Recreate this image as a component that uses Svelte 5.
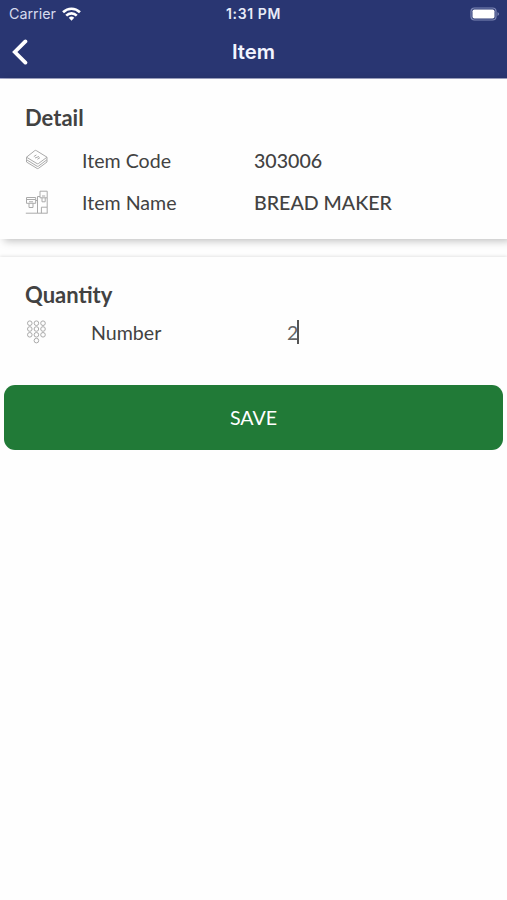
<script lang="ts">
  let code = '303006';
  let name = 'BREAD MAKER';
  let quantity = '2';

  const keys = [
    [4.8, 3.2], [11.4, 3.2], [18, 3.2],
    [4.8, 9], [11.4, 9], [18, 9],
    [4.8, 14.8], [11.4, 14.8], [18, 14.8],
    [11.4, 20.6]
  ];
</script>

<div class="screen">
  <header>
    <div class="status">
      <div class="carrier">
        <span>Carrier</span>
        <svg width="19" height="14" viewBox="0 0 18 13" fill="none" stroke="#fff" stroke-width="2.5">
          <path d="M1 4.8C5.6.4 12.4.4 17 4.8" />
          <path d="M4 8C6.9 5.2 11.1 5.2 14 8" />
          <path d="M6.4 10Q9 7.8 11.6 10L9 12.8Z" fill="#fff" stroke="none" />
        </svg>
      </div>
      <span class="time">1:31 PM</span>
      <svg class="battery" width="30" height="14" viewBox="0 0 30 14">
        <rect x="1" y="1" width="25" height="12" rx="3.5" fill="none" stroke="#7e88b5" stroke-width="1.2" />
        <rect x="2.5" y="2.5" width="22" height="9" rx="1.8" fill="#fff" />
        <path d="M27.5 5v4q1.6-.8 1.6-2t-1.6-2z" fill="#7e88b5" />
      </svg>
    </div>
    <div class="nav">
      <button class="back" aria-label="Back">
        <svg width="16" height="26" viewBox="0 0 16 26" fill="none" stroke="#fff" stroke-width="3.8" stroke-linecap="round">
          <path d="M13.4 2.4L2.8 13 13.4 23.6" />
        </svg>
      </button>
      <h1>Item</h1>
    </div>
  </header>

  <section class="card detail">
    <h2>Detail</h2>
    <div class="row">
      <svg class="icon" width="24" height="24" viewBox="0 0 24 24">
        <path d="M1.5 9.2L9.8 2.6Q10.5 2.1 11.3 2.6L22 9.2 13.4 15.6Q12.7 16 12 15.6Z" />
        <path d="M1.5 9.2v2.5l10.5 6.5q.7.4 1.4 0L22 11.7V9.2M1.5 11.7v2.3l10.5 6.4q.7.4 1.4 0L22 14v-2.3" />
        <path d="M8.8 8.6l2.6-1.7M10 10l4-1.5M12.4 11.3l2.6-1.7" />
      </svg>
      <span class="label">Item Code</span>
      <span class="value">{code}</span>
    </div>
    <div class="row">
      <svg class="icon" width="24" height="24" viewBox="0 0 24 24">
        <path d="M.8 23.2h21.7M1.5 7.5h9.2v5.8H1.5zM1.5 9.5h9.2M4 13.3v4.2h4v-4.2M4 11.8h4" />
        <path d="M15 1.2h7.2v6.6H15zM17 7.8v4h3.2v-4M17 6h3.2" />
        <path d="M15 6.5h-2.5v16.5M22.2 7.8v9.4h-5.8v6M22.2 17.2v6M10.7 10.5h1.8" />
      </svg>
      <span class="label">Item Name</span>
      <span class="value">{name}</span>
    </div>
  </section>

  <section class="card quantity">
    <h2>Quantity</h2>
    <div class="row">
      <svg class="icon" width="24" height="24" viewBox="0 0 24 24">
        {#each keys as [x, y]}
          <circle cx={x} cy={y} r="2.3" />
        {/each}
      </svg>
      <span class="label">Number</span>
      <span class="number">{quantity}<i class="caret"></i></span>
    </div>
  </section>

  <button class="save">SAVE</button>
</div>

<style>
  :global(body) {
    margin: 0;
    background: #fefefe;
  }

  .screen {
    display: flex;
    flex-direction: column;
    height: 900px;
    overflow: hidden;
    background: #fefefe;
    color: #424242;
    font-family: Lato, sans-serif;
  }

  header {
    box-sizing: border-box;
    height: 79px;
    flex-shrink: 0;
    background: #293672;
    border-bottom: 1px solid #a4a8c9;
    color: #fff;
    font-family: Inter, sans-serif;
  }

  .status {
    display: grid;
    grid-template-columns: 1fr auto 1fr;
    align-items: center;
    height: 27px;
    padding: 0 7px 0 9px;
  }

  .carrier {
    display: flex;
    align-items: center;
    gap: 6px;
    color: #d5daee;
    font-size: 14.3px;
  }

  .time {
    margin-right: 2px;
    color: #e8ebf8;
    font-size: 14px;
    font-weight: 600;
    letter-spacing: 0.6px;
  }

  .battery {
    justify-self: end;
  }

  .nav {
    display: grid;
    grid-template-columns: 50px 1fr 50px;
    align-items: center;
    height: 49px;
  }

  .back {
    display: flex;
    padding: 0 0 0 12px;
    border: 0;
    background: none;
  }

  h1 {
    margin: 0;
    color: #f2f4ff;
    font-size: 20.3px;
    font-weight: 600;
    text-align: center;
  }

  .card {
    box-sizing: border-box;
    flex-shrink: 0;
    padding-left: 25px;
    background: #fefefe;
  }

  .detail {
    height: 160px;
    padding-top: 24px;
    margin-bottom: 18px;
    box-shadow: 4px 2px 8px rgba(0, 0, 0, 0.25);
  }

  .quantity {
    height: 128px;
    padding-top: 23px;
    box-shadow: 0 -1px 3px rgba(0, 0, 0, 0.1);
    clip-path: inset(-4px 0 0 0);
  }

  h2 {
    margin: 0;
    height: 30px;
    line-height: 30px;
    font-size: 22px;
    font-weight: 700;
  }

  .row {
    display: grid;
    grid-template-columns: 57px 172px 1fr;
    align-items: center;
    height: 42px;
    font-size: 19.6px;
  }

  .detail h2 {
    margin-bottom: 6px;
  }

  .quantity .row {
    grid-template-columns: 66px 196px 1fr;
    height: 44px;
  }

  .icon {
    fill: none;
    stroke: #aaa;
    stroke-width: 1;
  }

  .value {
    font-weight: 500;
  }

  .number {
    display: flex;
    align-items: center;
    color: #666;
  }

  .caret {
    width: 2px;
    height: 24px;
    margin-left: -1px;
    background: #555;
  }

  .save {
    flex-shrink: 0;
    height: 65px;
    margin: 0 4px;
    border: 0;
    border-radius: 11px;
    background: #217a37;
    color: #fff;
    font-family: Lato, sans-serif;
    font-size: 19.6px;
  }
</style>
